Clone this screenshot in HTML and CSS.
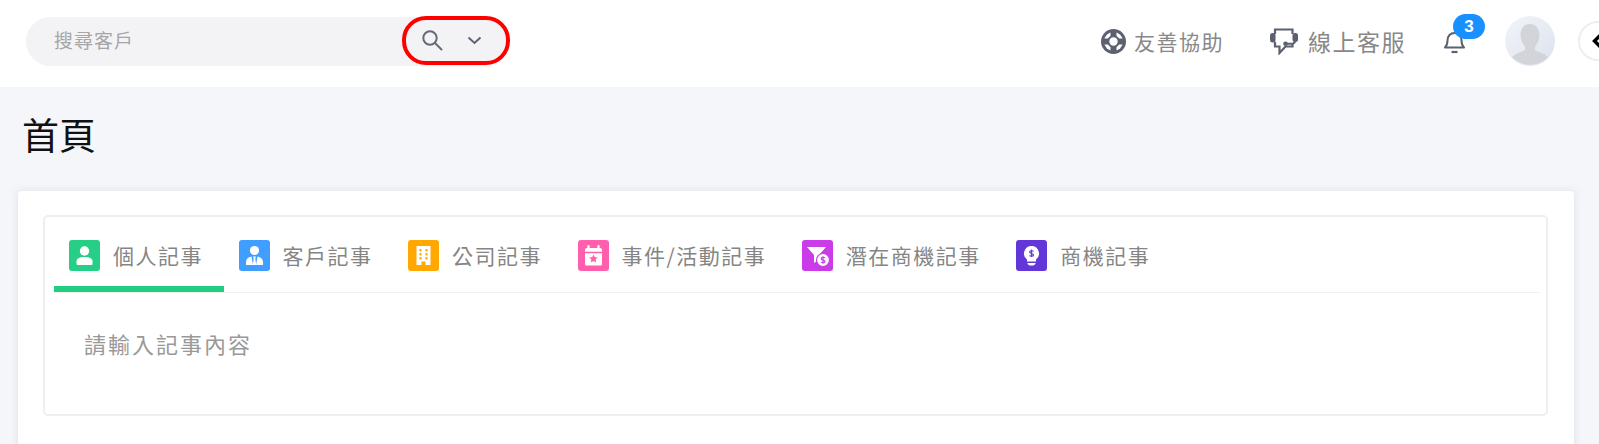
FILE: index.html
```html
<!DOCTYPE html>
<html lang="zh-TW">
<head>
    <meta charset="UTF-8">
    <meta name="viewport" content="width=device-width, initial-scale=1.0">
    <title>首頁</title>
    <link rel="stylesheet" href="styles.css">
</head>
<body>
    <header class="topbar">
        <div class="search">
            <span class="search-text">搜尋客戶</span>
            <div class="search-actions">
                <svg class="search-icon" width="22" height="22" viewBox="0 0 22 22" fill="none" stroke="#666a78" stroke-width="2" stroke-linecap="round"><circle cx="8" cy="8" r="6.700"/><path d="M13 13l6.500 6.500"/></svg>
                <svg class="chevron-icon" width="15" height="9" viewBox="0 0 15 9" fill="none" stroke="#5f6370" stroke-width="2"><path d="M1.500 1.500l6 5.500 6-5.500"/></svg>
            </div>
        </div>

        <div class="topbar-right">
            <a class="top-link help-link">
                <svg width="25" height="25" viewBox="0 0 25 25"><circle cx="12.500" cy="12.500" r="12.500" fill="#5c6070"/><circle cx="12.500" cy="12.500" r="9.500" fill="#fff"/><path d="M9.500 3h6v19h-6zM3 9.500h19v6H3z" fill="#5c6070"/><circle cx="12.500" cy="12.500" r="6.200" fill="#5c6070"/><circle cx="12.500" cy="12.500" r="4.200" fill="#fff"/></svg>
                <span>友善協助</span>
            </a>
            <a class="top-link service-link">
                <svg width="28" height="28" viewBox="0 0 28 28" fill="none" stroke="#5c6070"><path d="M5 7V2.500h17.500V7M5 15v4.500h4.500V26l6-6.500h7V17" stroke-width="2.200"/><rect x="0" y="6" width="5.500" height="9.500" rx="2.500" fill="#5c6070" stroke="none"/><rect x="22.500" y="6" width="5.500" height="9" rx="2.500" fill="#5c6070" stroke="none"/><path d="M25 14c0 2-2 2.800-4 2.800h-5" stroke-width="2"/><circle cx="15.500" cy="16.800" r="2.300" fill="#5c6070" stroke="none"/></svg>
                <span>線上客服</span>
            </a>
            <div class="bell">
                <svg width="23" height="25" viewBox="0 0 23 25" fill="none" stroke="#5c6070" stroke-width="2"><path d="M2 18.500c2-2 2.500-3.500 2.500-7 0-4.500 3-7.500 7-7.500s7 3 7 7.500c0 3.500 .5 5 2.500 7z" stroke-linejoin="round"/><path d="M8.500 23h6" stroke-width="2.200"/></svg>
                <span class="badge">3</span>
            </div>
            <div class="avatar">
                <svg width="50" height="50" viewBox="0 0 50 50"><path d="M25 8c6 0 9.500 5 9.500 11 0 5-2.500 9-4.500 12v3c3 2 9 3 13 7a25 25 0 0 1-36 0c4-4 10-5 13-7v-3c-2-3-4.500-7-4.500-12 0-6 3.500-11 9.500-11z" fill="#d2d4da"/></svg>
            </div>
            <button class="collapse-btn">
                <svg width="16" height="14" viewBox="0 0 16 14" fill="none" stroke="#000" stroke-width="3.400"><path d="M8 1.500L2.500 7 8 12.500 13.500 7"/></svg>
            </button>
        </div>
    </header>

    <main class="content">
        <h1 class="page-title">首頁</h1>

        <section class="card">
            <div class="note-box">
                <div class="tabs">
                    <div class="tab active">
                        <span class="tab-icon green">
                            <svg width="31" height="31" viewBox="0 0 31 31" fill="#fff"><circle cx="15.500" cy="11" r="4.700"/><path d="M7.500 24v-2.500c0-3 2.500-4.500 8-4.500s8 1.500 8 4.500V24a1 1 0 0 1-1 1h-14a1 1 0 0 1-1-1z"/></svg>
                        </span>
                        <span>個人記事</span>
                    </div>
                    <div class="tab">
                        <span class="tab-icon blue">
                            <svg width="31" height="31" viewBox="0 0 31 31" fill="#fff"><circle cx="15.500" cy="10.500" r="4.600"/><path d="M7 25v-3c0-3 2-4.500 5.500-5.500l1.500 8.500zM24 25v-3c0-3-2-4.500-5.500-5.500L17 25zM14 16.500h3l-.7 2 .9 6.500h-3.400l.9-6.500z"/></svg>
                        </span>
                        <span>客戶記事</span>
                    </div>
                    <div class="tab">
                        <span class="tab-icon orange">
                            <svg width="31" height="31" viewBox="0 0 31 31"><path d="M8.500 6h14v19h-5v-3.500h-4V25h-5z" fill="#fff"/><path d="M11.500 9h2v2.500h-2zM17.500 9h2v2.500h-2zM11.500 13h2v2.500h-2zM17.500 13h2v2.500h-2zM11.500 17h2v2.500h-2zM17.500 17h2v2.500h-2z" fill="#ffa800"/></svg>
                        </span>
                        <span>公司記事</span>
                    </div>
                    <div class="tab">
                        <span class="tab-icon pink">
                            <svg width="31" height="31" viewBox="0 0 31 31"><path d="M7 10a2 2 0 0 1 2-2h13a2 2 0 0 1 2 2v14a1.500 1.500 0 0 1-1.500 1.500h-14A1.500 1.500 0 0 1 7 24z" fill="#fff"/><path d="M10.500 6v4M20.500 6v4" stroke="#fff" stroke-width="2.200" stroke-linecap="round"/><path d="M7 12.500h17" stroke="#ff5fad" stroke-width="1.500"/><path d="M15.500 14.500l1.300 2.700 3 .4-2.200 2 .6 3-2.700-1.500-2.700 1.500.6-3-2.200-2 3-.4z" fill="#ff5fad"/></svg>
                        </span>
                        <span>事件/活動記事</span>
                    </div>
                    <div class="tab">
                        <span class="tab-icon magenta">
                            <svg width="31" height="31" viewBox="0 0 31 31"><path d="M5 7h19l-7 8v4.500l-5 3.500v-8z" fill="#fff"/><circle cx="21" cy="20" r="6.500" fill="#fff" stroke="#c93ce8" stroke-width="1.200"/><path d="M23 18c-.5-1-3.800-1.200-3.800.7 0 1.800 3.800 1 3.800 2.800 0 1.700-3.300 1.500-3.900.5M21 16.200v7.600" stroke="#c93ce8" stroke-width="1.200" fill="none"/></svg>
                        </span>
                        <span>潛在商機記事</span>
                    </div>
                    <div class="tab">
                        <span class="tab-icon purple">
                            <svg width="31" height="31" viewBox="0 0 31 31"><path d="M15.500 6a7.500 7.500 0 0 1 4.500 13.500V21.500h-9v-2A7.500 7.500 0 0 1 15.500 6z" fill="#fff"/><path d="M11.500 23h8v1l-2 1.500h-4l-2-1.500z" fill="#fff"/><path d="M17.500 11.500c-.5-1-3.900-1.200-3.900.6 0 1.800 3.900 1 3.900 2.800 0 1.800-3.500 1.500-4 .5M15.500 9.500v7.500" stroke="#6236d8" stroke-width="1.200" fill="none"/></svg>
                        </span>
                        <span>商機記事</span>
                    </div>
                </div>
                <div class="note-input">請輸入記事內容</div>
            </div>
        </section>
    </main>
</body>
</html>
```

FILE: styles.css
```css
* {
    box-sizing: border-box;
    margin: 0;
    padding: 0;
}

html,
body {
    height: 444px;
    overflow: hidden;
}

body {
    font-family: "Noto Sans CJK TC", "Liberation Sans", sans-serif;
    background: #f5f6fa;
    color: #888;
}

svg {
    display: block;
}

.topbar {
    height: 87px;
    padding: 0 0 5px 26px;
    background: #fff;
    display: flex;
    align-items: center;
    justify-content: space-between;
}

.search {
    width: 480px;
    height: 49px;
    border-radius: 25px;
    background: #f3f3f6;
    display: flex;
    align-items: center;
    justify-content: space-between;
    padding-left: 28px;
}

.search-text {
    font-size: 19px;
    letter-spacing: 1px;
    color: #a6a6a6;
    margin-top: -4px;
}

.search-actions {
    width: 108px;
    height: 49px;
    margin: -2px -4px 0 0;
    border: 4px solid #f00;
    border-radius: 24px;
    display: flex;
    align-items: center;
    padding-left: 16px;
    gap: 23px;
}

.search-icon {
    margin-top: 2px;
}

.topbar-right {
    display: flex;
    align-items: center;
    margin-right: -19px;
}

.top-link {
    display: flex;
    align-items: center;
    gap: 8px;
    font-size: 21px;
    letter-spacing: 1.500px;
}

.service-link {
    margin-left: 46px;
    gap: 10px;
    font-size: 23px;
}

.bell {
    position: relative;
    margin-left: 37px;
}

.badge {
    position: absolute;
    top: -15px;
    left: 10px;
    width: 32px;
    height: 25px;
    border-radius: 13px;
    background: #1890ff;
    color: #fff;
    font: bold 17px/25px "Liberation Sans", sans-serif;
    text-align: center;
}

.avatar {
    width: 50px;
    height: 50px;
    margin-left: 39px;
    border-radius: 50%;
    overflow: hidden;
    background: linear-gradient(135deg, #f2f4f9, #dde2ee);
}

.collapse-btn {
    width: 40px;
    height: 40px;
    margin-left: 23px;
    border: 2px solid #eee;
    border-radius: 50%;
    background: #fff;
    display: flex;
    align-items: center;
    padding-left: 12px;
}

.content {
    padding: 0 25px 0 18px;
}

.page-title {
    font-size: 37px;
    font-weight: 400;
    line-height: 36px;
    color: #111;
    margin: 29px 0 39px 4px;
}

.card {
    height: 300px;
    padding: 24px 26px 26px 25px;
    background: #fff;
    border-radius: 4px;
    box-shadow: 0 0 8px rgba(120, 125, 150, 0.18);
}

.note-box {
    height: 201px;
    border: 2px solid #efeff0;
    border-radius: 5px;
    padding: 0 7px 0 9px;
}

.tabs {
    display: flex;
    border-bottom: 1px solid #f0f0f1;
}

.tab {
    display: flex;
    align-items: center;
    gap: 13px;
    padding: 23px 20.500px 15px 15px;
    border-bottom: 6px solid transparent;
    font-size: 21px;
    line-height: 31px;
    letter-spacing: 1.500px;
    color: #858585;
}

.tab.active {
    border-bottom-color: #22cc80;
}

.tab-icon {
    width: 31px;
    height: 31px;
    border-radius: 3px;
}

.green { background: #26cf85; }
.blue { background: #3f9eff; }
.orange { background: #ffa800; }
.pink { background: #ff5fad; }
.magenta { background: #c93ce8; }
.purple { background: #6236d8; }

.note-input {
    padding: 34px 0 0 30px;
    font-size: 22px;
    line-height: 32px;
    letter-spacing: 2px;
    color: #999;
}
```
